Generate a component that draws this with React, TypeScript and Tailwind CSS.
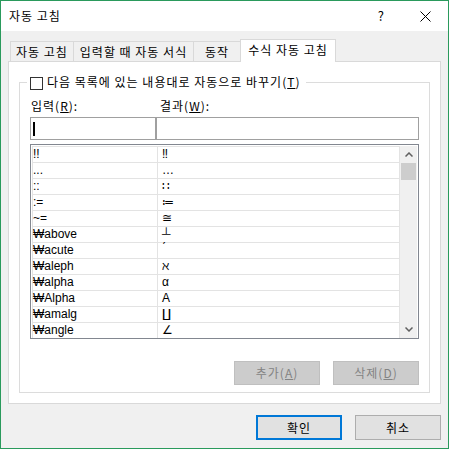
import React from 'react';

const rows: [string, string][] = [
  ['!!', '‼'],
  ['...', '…'],
  ['::', '∷'],
  [':=', '≔'],
  ['~=', '≅'],
  ['₩above', '┴'],
  ['₩acute', '\u00a0\u0301'],
  ['₩aleph', 'ℵ'],
  ['₩alpha', 'α'],
  ['₩Alpha', 'Α'],
  ['₩amalg', '∐'],
  ['₩angle', '∠'],
];

const Chevron = ({ down = false }: { down?: boolean }) => (
  <svg width="8" height="5" viewBox="0 0 8 5" className={down ? 'rotate-180' : ''}>
    <path d="M0.5 4.5 L4 1 L7.5 4.5" fill="none" stroke="#606060" strokeWidth={1.5} />
  </svg>
);

export default function App() {
  return (
    <div className="w-[449px] h-[449px] border border-[#2a9a5c] bg-[#f0f0f0] flex flex-col font-['Noto_Sans_CJK_KR',sans-serif] text-[12px] leading-[16px] tracking-[1px] text-black">
      {/* title bar */}
      <div className="h-[30px] bg-white flex items-center pl-[8px] pr-[17px]">
        <span>자동 고침</span>
        <span className="ml-auto text-[13px]">?</span>
        <svg width="11" height="11" viewBox="0 0 11 11" className="ml-[35px]">
          <path d="M0.5 0.5 L10.5 10.5 M10.5 0.5 L0.5 10.5" stroke="#000" strokeWidth={1} />
        </svg>
      </div>

      <div className="flex-1 flex flex-col px-[7px] pt-[8px]">
        {/* tabs */}
        <div className="flex items-end h-[22px] pl-[2px]">
          <div className="w-[63px] h-[20px] border-t border-l border-[#d9d9d9] flex items-center justify-center">자동 고침</div>
          <div className="w-[120px] h-[20px] border-t border-l border-[#d9d9d9] flex items-center justify-center">입력할 때 자동 서식</div>
          <div className="w-[47px] h-[20px] border-t border-l border-[#d9d9d9] flex items-center justify-center">동작</div>
          <div className="relative z-10 w-[96px] h-[23px] -mb-px border-t border-l border-r border-[#d9d9d9] bg-white flex items-center justify-center pb-[2px]">
            수식 자동 고침
          </div>
        </div>

        {/* tab panel */}
        <div className="h-[343px] border border-[#d9d9d9] bg-white pl-[10px] pr-[8px] pt-[12px]">
          <fieldset className="w-[411px] border border-[#dcdcdc] pl-[10px] pr-[10px] pb-[7px]">
            <legend className="-ml-[3px] pl-[3px] pr-[6px] h-[16px] flex items-center">
              <span className="w-[13px] h-[13px] border border-[#333333] bg-white mt-[2px]" />
              <span className="ml-[4px]">
                다음 목록에 있는 내용대로 자동으로 바꾸기(<span className="underline">T</span>)
              </span>
            </legend>

            <div className="flex mt-[8px]">
              <div className="w-[126px] pl-[1px]">
                입력(<span className="underline">R</span>):
              </div>
              <div className="pl-[4px]">
                결과(<span className="underline">W</span>):
              </div>
            </div>

            <div className="flex mt-[3px]">
              <div className="w-[126px] h-[23px] border border-[#a0a0a0] bg-white flex items-center pl-[2px]">
                <div className="w-[2px] h-[14px] bg-black" />
              </div>
              <div className="w-[263px] h-[23px] border border-[#a0a0a0] bg-white" />
            </div>

            {/* list */}
            <div className="mt-[4px] w-[389px] border border-[#828790] bg-white pt-[1px] px-[1px] flex tracking-normal">
              <div className="flex flex-col">
                {rows.map(([a, b], i) => (
                  <div key={i} className="flex h-[16px] font-['Liberation_Sans',sans-serif] text-[12px] leading-[15px]">
                    <div className="w-[125px] border-t border-l border-[#e3e3e3] flex items-center whitespace-pre">{a}</div>
                    <div className="w-[243px] border-t border-l border-r border-[#e3e3e3] flex items-center pl-[4px] whitespace-pre">{b}</div>
                  </div>
                ))}
              </div>
              <div className="w-[17px] bg-[#f0f0f0] flex flex-col">
                <div className="h-[17px] flex items-center justify-center">
                  <Chevron />
                </div>
                <div className="mx-[1px] h-[17px] bg-[#cdcdcd]" />
                <div className="flex-1" />
                <div className="h-[17px] flex items-center justify-center">
                  <Chevron down />
                </div>
              </div>
            </div>

            <div className="flex justify-end gap-[13px] mt-[22px]">
              <div className="w-[86px] h-[24px] border border-[#bfbfbf] bg-[#cccccc] text-[#838383] flex items-center justify-center">
                추가(<span className="underline">A</span>)
              </div>
              <div className="w-[86px] h-[24px] border border-[#bfbfbf] bg-[#cccccc] text-[#838383] flex items-center justify-center">
                삭제(<span className="underline">D</span>)
              </div>
            </div>
          </fieldset>
        </div>

        {/* dialog buttons */}
        <div className="flex justify-end gap-[13px] mt-[11px]">
          <div className="w-[86px] h-[25px] border-2 border-[#0078d7] bg-[#e1e1e1] flex items-center justify-center">확인</div>
          <div className="w-[86px] h-[25px] border border-[#adadad] bg-[#e1e1e1] flex items-center justify-center">취소</div>
        </div>
      </div>
    </div>
  );
}
